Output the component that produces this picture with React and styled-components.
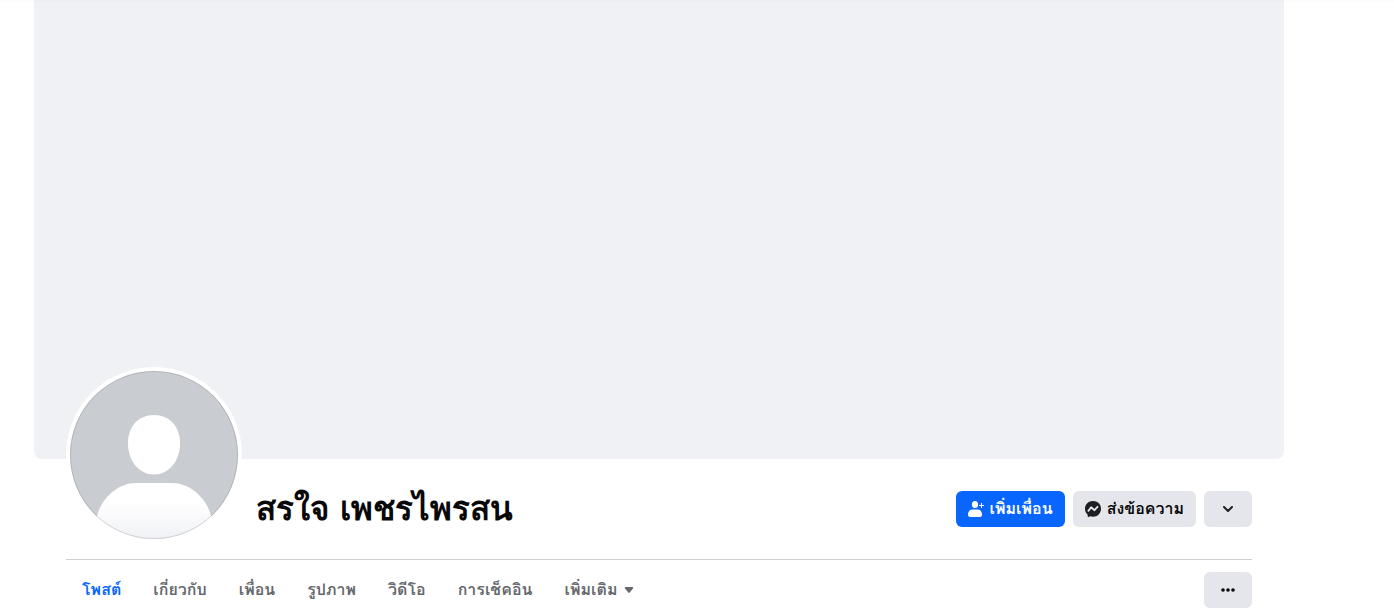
import React from "react";
import styled, { createGlobalStyle } from "styled-components";

const GlobalStyle = createGlobalStyle`
  *, *::before, *::after { box-sizing: border-box; }
  body {
    margin: 0;
    background: #fff;
    color: #080809;
    font-family: Loma, "DejaVu Sans", sans-serif;
  }
`;

const Page = styled.main`
  padding: 0 110px 0 34px;
  box-shadow: inset 0 2px rgba(0, 0, 0, 0.01);
`;

const Cover = styled.div`
  height: 459px;
  border-radius: 0 0 8px 8px;
  background: #f0f1f5;
  box-shadow: inset 0 2px rgba(0, 0, 0, 0.01);
`;

const Content = styled.div`
  padding: 0 32px;
`;

const Header = styled.header`
  display: flex;
  align-items: flex-start;
  margin-top: -92px;
  padding-bottom: 16px;
  border-bottom: 1px solid #ced0d4;
`;

const Avatar = styled.svg`
  display: block;
  flex: none;
  width: 176px;
  height: 176px;
`;

const Name = styled.h1`
  flex: 1;
  margin: 123px 0 0;
  padding-left: 14px;
  font-family: "DejaVu Sans", sans-serif;
  font-size: 33px;
  line-height: 38px;
  font-weight: 700;
  color: #080809;
`;

const Actions = styled.div`
  display: flex;
  gap: 8px;
  margin-top: 124px;
`;

const Button = styled.button`
  display: flex;
  align-items: center;
  justify-content: center;
  gap: 6px;
  height: 36px;
  min-width: 48px;
  padding: 0 12px;
  border: 0;
  border-radius: 6px;
  background: ${(p) => (p.$primary ? "#0866ff" : "#e4e6eb")};
  color: ${(p) => (p.$primary ? "#fff" : "#080809")};
  font: 700 16px/20px Loma, "DejaVu Sans", sans-serif;
  white-space: nowrap;
  cursor: pointer;
`;

const Icon = styled.svg`
  display: block;
  flex: none;
  width: 16px;
  height: 16px;
`;

const TabBar = styled.nav`
  display: flex;
  align-items: center;
  justify-content: space-between;
  padding: 12px 0 4px;
`;

const Tabs = styled.div`
  display: flex;
`;

const Tab = styled.a`
  display: flex;
  align-items: center;
  gap: 6px;
  height: 36px;
  padding: 0 16px;
  color: ${(p) => (p.$active ? "#0866ff" : "#65686c")};
  font-size: 16px;
  line-height: 20px;
  font-weight: 700;
  white-space: nowrap;
  text-decoration: none;
`;

const Caret = styled.svg`
  display: block;
  width: 12px;
  height: 12px;
`;

const tabs = ["โพสต์", "เกี่ยวกับ", "เพื่อน", "รูปภาพ", "วิดีโอ", "การเช็คอิน"];

function ProfilePicture() {
  return (
    <Avatar viewBox="0 0 176 176" role="img" aria-label="สรใจ เพชรไพรสน">
      <defs>
        <clipPath id="face">
          <circle cx="88" cy="88" r="84" />
        </clipPath>
        <linearGradient id="body" x1="0" y1="0" x2="0" y2="1">
          <stop offset="0.3" stopColor="#fff" />
          <stop offset="1" stopColor="#eff0f4" />
        </linearGradient>
      </defs>
      <circle cx="88" cy="88" r="88" fill="#fff" />
      <g clipPath="url(#face)">
        <rect width="176" height="176" fill="#c9ccd1" />
        <path d="M88 48c16 0 26 12 26 28 0 18-11 31.500-26 31.500S62 94 62 76c0-16 10-28 26-28z" fill="#fff" />
        <path d="M30 153c3-19 20-37 40-37h36c20 0 37 18 40 37v23H30z" fill="url(#body)" />
      </g>
      <circle cx="88" cy="88" r="83.5" fill="none" stroke="#000" strokeOpacity="0.12" />
    </Avatar>
  );
}

export default function App() {
  return (
    <>
      <GlobalStyle />
      <Page>
        <Cover />
        <Content>
          <Header>
            <ProfilePicture />
            <Name>สรใจ เพชรไพรสน</Name>
            <Actions>
              <Button $primary type="button">
                <Icon viewBox="0 0 16 16" fill="#fff" aria-hidden="true">
                  <ellipse cx="7" cy="3.5" rx="3.1" ry="3.5" />
                  <path d="M0 13.500C0 10.400 2 8.500 4.500 8.500h5c2.500 0 4.500 1.900 4.500 5 0 1.600-.7 2.500-2 2.500H2c-1.300 0-2-.9-2-2.500z" />
                  <path d="M13.500 2v5M11 4.500h5" stroke="#fff" strokeWidth="1" />
                </Icon>
                เพิ่มเพื่อน
              </Button>
              <Button type="button">
                <Icon viewBox="0 0 16 16" aria-hidden="true">
                  <path d="M8 0C3.500 0 0 3.300 0 7.700c0 2.300.9 4.300 2.500 5.700l.2.500v1.500c0 .5.500.8.900.6l1.700-.7c.9.2 1.800.4 2.700.4 4.500 0 8-3.400 8-8S12.500 0 8 0z" fill="#1c1e21" />
                  <path d="M3.400 9.900l2.700-3.600 3.400 2.900 3-3.400" fill="none" stroke="#e4e6eb" strokeWidth="1.800" strokeLinejoin="round" strokeLinecap="round" />
                </Icon>
                ส่งข้อความ
              </Button>
              <Button type="button" aria-label="ดูตัวเลือกเพิ่มเติม">
                <Icon viewBox="0 0 16 16" fill="none" aria-hidden="true">
                  <path d="M4 6l4 4 4-4" stroke="#1c1e21" strokeWidth="2" strokeLinecap="round" strokeLinejoin="round" />
                </Icon>
              </Button>
            </Actions>
          </Header>
          <TabBar>
            <Tabs>
              {tabs.map((label, i) => (
                <Tab key={label} href="#" $active={i === 0}>
                  {label}
                </Tab>
              ))}
              <Tab href="#">
                เพิ่มเติม
                <Caret viewBox="0 0 12 12" fill="#65686c" aria-hidden="true">
                  <path d="M2.600 3h6.800c.8 0 1.100.8.600 1.400L6.700 8.600c-.4.500-1 .5-1.400 0L2 4.400C1.500 3.800 1.800 3 2.600 3z" />
                </Caret>
              </Tab>
            </Tabs>
            <Button type="button" aria-label="เมนูโปรไฟล์">
              <Icon viewBox="0 0 16 16" fill="#080809" aria-hidden="true">
                <circle cx="3" cy="8" r="1.800" />
                <circle cx="8" cy="8" r="1.800" />
                <circle cx="13" cy="8" r="1.800" />
              </Icon>
            </Button>
          </TabBar>
        </Content>
      </Page>
    </>
  );
}
